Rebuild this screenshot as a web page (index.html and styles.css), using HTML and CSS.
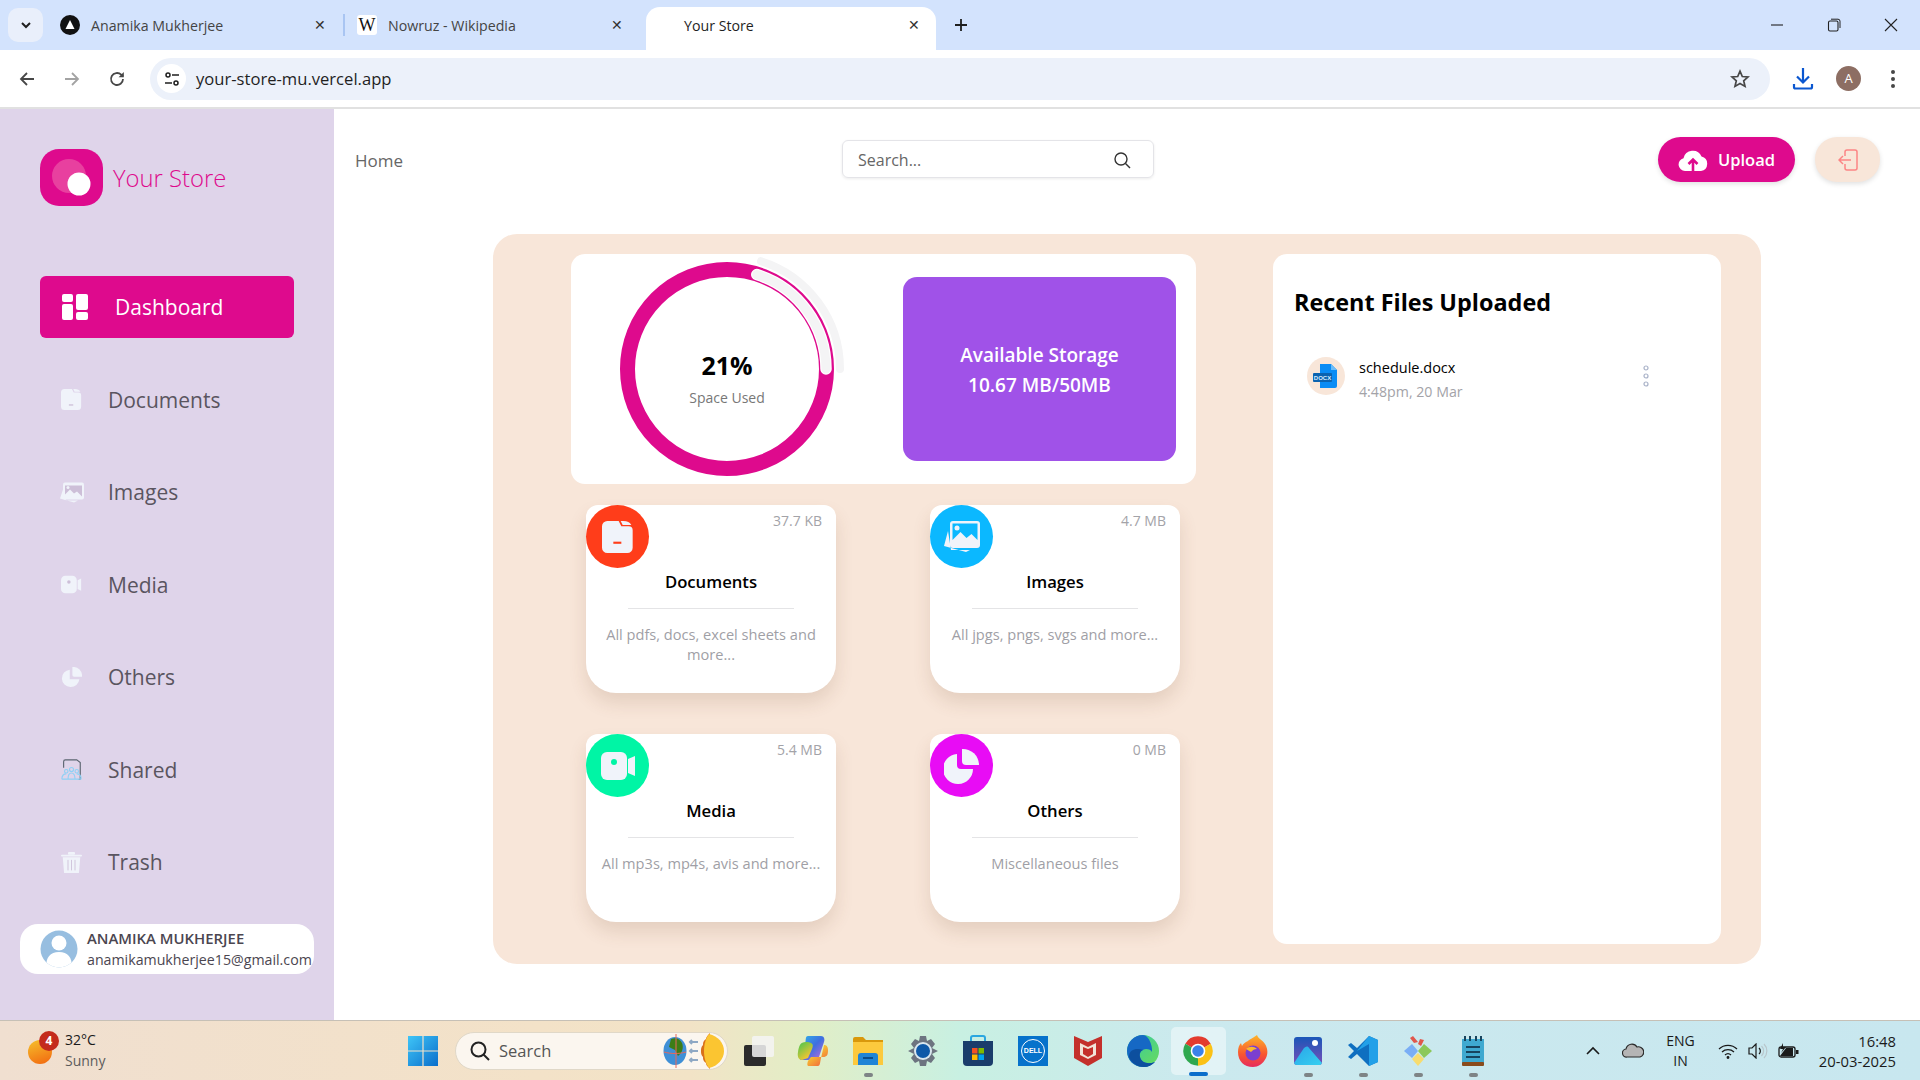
FILE: index.html
```html
<!DOCTYPE html>
<html>
    <head>
        <title>Your Store</title>
        <meta charset="UTF-8">
        <link rel="stylesheet" href="styles.css">
    </head>
    <body>
        <!-- browser frame -->
        <div class="tabstrip">
            <div class="tab-search">
                <svg width="14" height="14" viewBox="0 0 14 14"><path d="M3 5l4 4 4-4" fill="none" stroke="#1f1f1f" stroke-width="2"/></svg>
            </div>
            <div class="tab tab-first">
                <svg class="favicon" viewBox="0 0 20 20"><circle cx="10" cy="10" r="10" fill="#111"/><path d="M10 5l4.500 9h-9z" fill="#fff"/></svg>
                <span class="tab-title">Anamika Mukherjee</span>
                <span class="tab-close">✕</span>
            </div>
            <div class="tab-sep"></div>
            <div class="tab tab-second">
                <span class="favicon favicon-w">W</span>
                <span class="tab-title">Nowruz - Wikipedia</span>
                <span class="tab-close">✕</span>
            </div>
            <div class="tab tab-active">
                <span class="tab-title">Your Store</span>
                <span class="tab-close">✕</span>
            </div>
            <svg class="new-tab" width="16" height="16" viewBox="0 0 16 16"><path d="M8 2v12M2 8h12" stroke="#1f1f1f" stroke-width="1.800"/></svg>
            <div class="window-buttons">
                <svg width="14" height="14" viewBox="0 0 14 14"><path d="M1 7h12" stroke="#222" stroke-width="1.100"/></svg>
                <svg width="14" height="14" viewBox="0 0 14 14"><rect x="1.500" y="3" width="9.500" height="10" rx="1.500" fill="none" stroke="#222" stroke-width="1.100"/><path d="M4 1.200h7a2 2 0 0 1 2 2V10" fill="none" stroke="#222" stroke-width="1"/></svg>
                <svg width="14" height="14" viewBox="0 0 14 14"><path d="M1 1l12 12M13 1L1 13" stroke="#222" stroke-width="1.100"/></svg>
            </div>
        </div>
        <div class="toolbar">
            <svg class="nav-btn" width="18" height="18" viewBox="0 0 18 18"><path d="M16 9H3M9 3L3 9l6 6" fill="none" stroke="#474747" stroke-width="1.800"/></svg>
            <svg class="nav-btn" width="18" height="18" viewBox="0 0 18 18"><path d="M2 9h13M9 3l6 6-6 6" fill="none" stroke="#a3a3a3" stroke-width="1.800"/></svg>
            <svg class="nav-btn" width="18" height="18" viewBox="0 0 18 18"><path d="M15 9a6 6 0 1 1-1.800-4.300L15 6.500" fill="none" stroke="#474747" stroke-width="1.800"/><path d="M15.800 2v5.200h-5.200z" fill="#474747"/></svg>
            <div class="omnibox">
                <div class="site-chip">
                    <svg width="18" height="18" viewBox="0 0 18 18"><circle cx="5" cy="5" r="2" fill="none" stroke="#1f1f1f" stroke-width="1.500"/><path d="M9 5h7M2 13h7" stroke="#1f1f1f" stroke-width="1.500"/><circle cx="13" cy="13" r="2" fill="none" stroke="#1f1f1f" stroke-width="1.500"/></svg>
                </div>
                <span class="url">your-store-mu.vercel.app</span>
                <svg class="star" width="20" height="20" viewBox="0 0 20 20"><path d="M10 2.200l2.300 5.300 5.700.500-4.300 3.800 1.300 5.600L10 14.500l-5 2.900 1.300-5.600L2 8l5.700-.500z" fill="none" stroke="#474747" stroke-width="1.700"/></svg>
            </div>
            <svg class="download" width="22" height="24" viewBox="0 0 22 24"><path d="M11 1v14M5 9.500l6 6 6-6" fill="none" stroke="#0b57d0" stroke-width="2.200"/><path d="M2 17v3a1.500 1.500 0 0 0 1.500 1.500h15A1.500 1.500 0 0 0 20 20v-3" fill="none" stroke="#0b57d0" stroke-width="2.200"/></svg>
            <div class="profile">A</div>
            <svg class="menu-dots" width="6" height="20" viewBox="0 0 6 20"><circle cx="3" cy="3" r="2" fill="#474747"/><circle cx="3" cy="10" r="2" fill="#474747"/><circle cx="3" cy="17" r="2" fill="#474747"/></svg>
        </div>

        <!-- the store app -->
        <div class="app">
            <aside class="sidebar">
                <div class="brand">
                    <svg class="brand-logo" viewBox="0 0 63 57"><rect width="63" height="57" rx="19" fill="#de0a8d"/><circle cx="29" cy="27" r="17" fill="#e8409f"/><circle cx="39" cy="35" r="11.500" fill="#fff"/></svg>
                    <span class="brand-name">Your Store</span>
                </div>
                <nav class="nav">
                    <a class="nav-item nav-active">
                        <svg class="nav-icon" viewBox="0 0 26 26" fill="#fff"><rect x="0" y="0" width="11" height="8" rx="2"/><rect x="0" y="10" width="11" height="16" rx="2"/><rect x="14" y="0" width="12" height="16" rx="2"/><rect x="14" y="18" width="12" height="8" rx="2"/></svg>
                        <span>Dashboard</span>
                    </a>
                    <a class="nav-item">
                        <svg class="nav-icon" viewBox="0 0 24 24" fill="#f0f3fa"><path d="M4 0h8.500l2 4H20a3 3 0 0 1 3 3v13a4 4 0 0 1-4 4H4a4 4 0 0 1-4-4V4a4 4 0 0 1 4-4z"/><path d="M14 0h2c3 0 5 1 6 3h-6.500z"/><rect x="9" y="17.500" width="5" height="1.500" fill="#cdbfd8"/></svg>
                        <span>Documents</span>
                    </a>
                    <a class="nav-item">
                        <svg class="nav-icon nav-icon-wide" viewBox="0 0 24 20"><path d="M3 7L0 16l14 4 4-2H6z" fill="#f0f3fa"/><rect x="3" y="0" width="21" height="17" rx="2" fill="#f0f3fa"/><path d="M5 12l5-5 4 4 3-2 5 5V3H5z" fill="#cdbfd8"/><circle cx="8" cy="5" r="1.500" fill="#f0f3fa"/></svg>
                        <span>Images</span>
                    </a>
                    <a class="nav-item">
                        <svg class="nav-icon" viewBox="0 0 24 22" fill="#f0f3fa"><rect x="0" y="1" width="18" height="20" rx="5"/><path d="M19 6l4-2v14l-4-2z"/><circle cx="9" cy="8" r="2" fill="#cdbfd8"/></svg>
                        <span>Media</span>
                    </a>
                    <a class="nav-item">
                        <svg class="nav-icon" viewBox="0 0 24 24" fill="#f0f3fa"><path d="M10 3a10 10 0 1 0 11 11H10z"/><path d="M13 0a10 10 0 0 1 11 11H15a2 2 0 0 1-2-2z"/></svg>
                        <span>Others</span>
                    </a>
                    <a class="nav-item">
                        <svg class="nav-icon" viewBox="0 0 24 24" fill="none"><path d="M3 10V3a2 2 0 0 1 2-2h13l4 3v18a2 2 0 0 1-2 2" stroke="#5b6470" stroke-width="1.300"/><g stroke="#8fd0f5" stroke-width="1.300"><circle cx="6" cy="14" r="2"/><circle cx="12" cy="12" r="2.300"/><circle cx="18" cy="14" r="2"/><path d="M1 23c0-5 2-6 5-6M8 23c0-6 2-7 4-7s4 1 4 7M23 23c0-5-2-6-5-6M1 23h22"/></g></svg>
                        <span>Shared</span>
                    </a>
                    <a class="nav-item">
                        <svg class="nav-icon" viewBox="0 0 24 24" fill="#f0f3fa"><rect x="0" y="3" width="24" height="2" rx="1"/><rect x="8" y="0" width="8" height="3" rx="1"/><path d="M2 6h20l-1.500 18h-17z"/><path d="M8 9v12M12 9v12M16 9v12" stroke="#cdbfd8" stroke-width="1"/></svg>
                        <span>Trash</span>
                    </a>
                </nav>
                <div class="user-card">
                    <svg class="user-avatar" viewBox="0 0 38 38"><defs><clipPath id="avatar-clip"><circle cx="19" cy="19" r="18.500"/></clipPath></defs><circle cx="19" cy="19" r="18.500" fill="#97bee0"/><g clip-path="url(#avatar-clip)" fill="#fff"><circle cx="19" cy="13" r="7.500"/><path d="M6 38c0-11 4-16 13-16s13 5 13 16z"/></g></svg>
                    <div class="user-info">
                        <div class="user-name">ANAMIKA MUKHERJEE</div>
                        <div class="user-email">anamikamukherjee15@gmail.com</div>
                    </div>
                </div>
            </aside>

            <main class="content">
                <header class="topbar">
                    <span class="crumb">Home</span>
                    <div class="search">
                        <span>Search...</span>
                        <svg width="18" height="18" viewBox="0 0 18 18"><circle cx="8" cy="8" r="6" fill="none" stroke="#333" stroke-width="1.400"/><path d="M12.500 12.500L17 17" stroke="#333" stroke-width="1.400"/></svg>
                    </div>
                    <button class="upload-btn">
                        <svg width="30" height="24" viewBox="0 0 30 24"><path d="M7 23a6.500 6.500 0 0 1-1.500-12.800A9.500 9.500 0 0 1 23.500 8.500 7.400 7.400 0 0 1 23 23z" fill="#fff"/><path d="M15 23V12M10.500 16l4.500-4.500 4.500 4.500" fill="none" stroke="#de0a8d" stroke-width="2.600"/></svg>
                        Upload
                    </button>
                    <button class="logout-btn">
                        <svg width="20" height="22" viewBox="0 0 20 22" fill="none" stroke="#fb8585" stroke-width="1.500"><path d="M7 7V3a2 2 0 0 1 2-2h8a2 2 0 0 1 2 2v16a2 2 0 0 1-2 2H9a2 2 0 0 1-2-2v-4"/><path d="M13 11H1M5 7l-4 4 4 4"/></svg>
                    </button>
                </header>

                <section class="panel">
                    <div class="left-col">
                        <div class="storage-card">
                            <div class="ring">
                                <svg width="236" height="236" viewBox="0 0 236 236" fill="none">
                                    <circle cx="118" cy="118" r="99.500" stroke="#de0a8d" stroke-width="15"/>
                                    <path d="M147.800 23.600A99 99 0 0 1 217 118" stroke="#fff" stroke-width="11.500" stroke-linecap="round"/>
                                    <path d="M147.800 23.600A99 99 0 0 1 217 118" stroke="#f4f4f5" stroke-width="9" stroke-linecap="round"/>
                                    <path d="M152 10.200A113 113 0 0 1 231 118" stroke="#f4f4f5" stroke-width="8" stroke-linecap="round"/>
                                </svg>
                                <div class="ring-label">
                                    <div class="ring-value">21%</div>
                                    <div class="ring-text">Space Used</div>
                                </div>
                            </div>
                            <div class="available">Available Storage<br>10.67 MB/50MB</div>
                        </div>

                        <div class="type-grid">
                            <div class="type-card">
                                <div class="type-head">
                                    <div class="type-icon icon-red">
                                        <svg width="32" height="32" viewBox="0 0 24 24" fill="#f0f3fa"><path d="M4 0h8.500l2 4H20a3 3 0 0 1 3 3v13a4 4 0 0 1-4 4H4a4 4 0 0 1-4-4V4a4 4 0 0 1 4-4z"/><path d="M14 0h2c3 0 5 1 6 3h-6.500z"/><rect x="8.500" y="15.500" width="6" height="1.600" fill="#ff3d1a"/></svg>
                                    </div>
                                    <span class="type-size">37.7 KB</span>
                                </div>
                                <h3>Documents</h3>
                                <div class="type-line"></div>
                                <p>All pdfs, docs, excel sheets and more...</p>
                            </div>
                            <div class="type-card">
                                <div class="type-head">
                                    <div class="type-icon icon-blue">
                                        <svg width="38" height="34" viewBox="0 0 38 34"><path d="M5 11L1 26l22 6 4-2H8z" fill="#f0f3fa"/><rect x="7" y="1" width="30" height="27" rx="3" fill="#f0f3fa"/><path d="M9.500 20l8-8 6 6 5-4 6 6V3.500h-25z" fill="#0bb8ff"/><circle cx="14" cy="8" r="2.500" fill="#f0f3fa"/></svg>
                                    </div>
                                    <span class="type-size">4.7 MB</span>
                                </div>
                                <h3>Images</h3>
                                <div class="type-line"></div>
                                <p>All jpgs, pngs, svgs and more...</p>
                            </div>
                            <div class="type-card">
                                <div class="type-head">
                                    <div class="type-icon icon-green">
                                        <svg width="34" height="28" viewBox="0 0 34 28" fill="#f0f3fa"><rect x="0" y="0" width="26" height="28" rx="6"/><path d="M27 7l7-3v20l-7-3z"/><circle cx="13" cy="10" r="3" fill="#00f5a5"/></svg>
                                    </div>
                                    <span class="type-size">5.4 MB</span>
                                </div>
                                <h3>Media</h3>
                                <div class="type-line"></div>
                                <p>All mp3s, mp4s, avis and more...</p>
                            </div>
                            <div class="type-card">
                                <div class="type-head">
                                    <div class="type-icon icon-magenta">
                                        <svg width="36" height="36" viewBox="0 0 36 36" fill="#f0f3fa"><path d="M13 6a15 15 0 1 0 16 15H17a4 4 0 0 1-4-4z"/><path d="M18 1a16 16 0 0 1 17 16H22a4 4 0 0 1-4-4z"/></svg>
                                    </div>
                                    <span class="type-size">0 MB</span>
                                </div>
                                <h3>Others</h3>
                                <div class="type-line"></div>
                                <p>Miscellaneous files</p>
                            </div>
                        </div>
                    </div>

                    <div class="recent">
                        <h2>Recent Files Uploaded</h2>
                        <div class="file-row">
                            <div class="file-icon">
                                <svg width="26" height="26" viewBox="0 0 26 26"><path d="M7 1h11l6 6v16a2 2 0 0 1-2 2H7z" fill="#0a8cf5"/><path d="M18 1l6 6h-6z" fill="#6bbcf8"/><rect x="0" y="10" width="19" height="9" rx="1" fill="#0b63b0"/><text x="9.500" y="17" class="docx-label">DOCX</text></svg>
                            </div>
                            <div class="file-text">
                                <div class="file-name">schedule.docx</div>
                                <div class="file-date">4:48pm, 20 Mar</div>
                            </div>
                            <svg class="file-menu" width="6" height="22" viewBox="0 0 6 22" fill="none" stroke="#a9b2c8" stroke-width="1.200"><circle cx="3" cy="3" r="2"/><circle cx="3" cy="11" r="2"/><circle cx="3" cy="19" r="2"/></svg>
                        </div>
                    </div>
                </section>
            </main>
        </div>

        <!-- windows taskbar -->
        <footer class="taskbar">
            <div class="weather">
                <div class="weather-icon"><span class="weather-badge">4</span></div>
                <div class="weather-text">
                    <div>32°C</div>
                    <div class="weather-sub">Sunny</div>
                </div>
            </div>
            <svg class="start" width="30" height="30" viewBox="0 0 30 30">
                <defs><linearGradient id="start-grad" x1="0" y1="0" x2="1" y2="1"><stop offset="0" stop-color="#3fc5f7"/><stop offset="1" stop-color="#0a6ecb"/></linearGradient></defs>
                <path d="M0 0h14.400v14.400H0zM15.600 0H30v14.400H15.600zM0 15.600h14.400V30H0zM15.600 15.600H30V30H15.600z" fill="url(#start-grad)"/>
            </svg>
            <div class="win-search">
                <svg width="22" height="22" viewBox="0 0 22 22"><circle cx="9.500" cy="9.500" r="7" fill="none" stroke="#222" stroke-width="2"/><path d="M14.500 14.500L20 20" stroke="#222" stroke-width="2"/></svg>
                <span>Search</span>
                <svg class="search-art" width="62" height="36" viewBox="0 0 62 36">
                    <ellipse cx="12" cy="18" rx="11.500" ry="14" fill="#3f8fd6"/>
                    <path d="M8 6c5-2 9 0 11 4 2 5 0 10-4 13l-3-6-6-3z" fill="#3c7d16"/>
                    <path d="M1 19c7 2 15 2 22 0M13 1v34" stroke="#e8685a" stroke-width="1" fill="none"/>
                    <path d="M35 9h-8m2-2l-2 2 2 2M35 18h-8m2-2l-2 2 2 2M35 27h-8m2-2l-2 2 2 2" stroke="#8ea8c4" stroke-width="2" fill="none"/>
                    <path d="M47 0c-3 3-4 5-4 6-3 2-3 4-3 6-2 2-2 4-2 6s0 4 2 6c0 2 0 4 3 6 0 2 1 3 4 6z" fill="#d9701a"/>
                    <path d="M46 1c9 2 15 9 15 17s-6 15-15 17c-3-4-5-10-5-17s2-13 5-17z" fill="#fbc531"/>
                </svg>
            </div>
            <svg class="taskview" width="30" height="30" viewBox="0 0 30 30"><rect x="0" y="9" width="22" height="21" rx="2" fill="#2b2b2b"/><rect x="8" y="0" width="22" height="21" rx="2" fill="#f5f5f5" fill-opacity=".85"/></svg>
            <div class="app-icons">
                <div class="app-icon">
                    <svg width="32" height="32" viewBox="0 0 32 32"><defs><linearGradient id="cop-a" x1="0" y1="0" x2="1" y2="1"><stop offset="0" stop-color="#2fb7e8"/><stop offset=".5" stop-color="#3f6fe0"/><stop offset="1" stop-color="#c86bd8"/></linearGradient><linearGradient id="cop-b" x1="0" y1="0" x2="1" y2="1"><stop offset="0" stop-color="#3fc64f"/><stop offset=".5" stop-color="#f7c531"/><stop offset="1" stop-color="#f0503f"/></linearGradient></defs><path d="M11 1h13c3 0 4 3 3 6l-5 15c-1 2-3 3-5 3H3c1-1 2-3 3-6l2-8c1-5 0-10 3-10z" fill="url(#cop-a)"/><path d="M9 7C3 7 2 11 1 17c-1 5 1 8 4 8l6-2 4-9c2-5 0-7-6-7zM21 31h-9c-2 0-2-2-1-5l3-4h12c4 0 5-2 5-7 0-4-2-5-4-5l-3 13c-1 5-1 8-3 8z" fill="url(#cop-b)"/></svg>
                </div>
                <div class="app-icon app-open">
                    <svg width="30" height="28" viewBox="0 0 30 28"><path d="M0 2a2 2 0 0 1 2-2h8l3 3h17v25H0z" fill="#d9980c"/><path d="M0 5h30v23H0z" fill="#fcc93d"/><path d="M5 28v-9a3 3 0 0 1 3-3h14a3 3 0 0 1 3 3v9z" fill="#1f84d6"/><rect x="10" y="20" width="10" height="2" fill="#0a4d8c"/></svg>
                </div>
                <div class="app-icon">
                    <svg width="30" height="30" viewBox="0 0 30 30"><path d="M12 0h6l1 5 4-2 4 5-3 4 6 3-6 3 3 4-4 5-4-2-1 5h-6l-1-5-4 2-4-5 3-4-6-3 6-3-3-4 4-5 4 2z" fill="#6d7480"/><circle cx="15" cy="15" r="9" fill="#dbe7ef"/><circle cx="15" cy="15" r="7" fill="#0f59a8"/></svg>
                </div>
                <div class="app-icon">
                    <svg width="30" height="31" viewBox="0 0 30 31"><path d="M8 7V3a2 2 0 0 1 2-2h10a2 2 0 0 1 2 2v4" fill="none" stroke="#2aa7e0" stroke-width="2"/><path d="M0 6h30v21a4 4 0 0 1-4 4H4a4 4 0 0 1-4-4z" fill="#1a3d6b"/><rect x="9" y="13" width="5.500" height="5.500" fill="#f25022"/><rect x="15.500" y="13" width="5.500" height="5.500" fill="#7fba00"/><rect x="9" y="19.500" width="5.500" height="5.500" fill="#ffb900"/><rect x="15.500" y="19.500" width="5.500" height="5.500" fill="#00a4ef"/></svg>
                </div>
                <div class="app-icon">
                    <div class="dell-logo"><span>DELL</span></div>
                </div>
                <div class="app-icon">
                    <svg width="28" height="30" viewBox="0 0 28 30"><path d="M0 0l14 6 14-6v22l-14 8-14-8z" fill="#c4302b"/><path d="M6 7l8 4 8-4v12l-8 4-8-4z" fill="#f1e4d8"/><path d="M9 18V11l5 2 5-2v7l-5 3z" fill="#c4302b"/></svg>
                </div>
                <div class="app-icon">
                    <svg width="32" height="32" viewBox="0 0 32 32"><defs><linearGradient id="edge-a" x1="0" y1="0" x2="1" y2="1"><stop offset="0" stop-color="#32c8a8"/><stop offset="1" stop-color="#6bdc5a"/></linearGradient></defs><circle cx="16" cy="16" r="16" fill="url(#edge-a)"/><path d="M16 0C7 0 0 7 0 16c0 9 7 16 16 16 5 0 9-2 12-5-8 3-14 0-15-5-1-4 2-8 6-8 3 0 5 1 6 3 1-5-3-17-9-17z" fill="#1668c4"/><path d="M2 22c2 6 9 10 15 10 4 0 8-2 11-5-8 3-14 0-15-5-1-3 0-6 3-7-6-2-14-1-14 7z" fill="#0d4f9e"/></svg>
                </div>
                <div class="app-icon app-current">
                    <svg width="32" height="32" viewBox="0 0 24 24"><path d="M12 12L2.470 6.500A11 11 0 0 1 21.530 6.500z" fill="#e33b2e"/><path d="M12 12L2.470 6.500A11 11 0 0 0 12 23z" fill="#2fa84f"/><path d="M12 12l9.530-5.500A11 11 0 0 1 12 23z" fill="#fbc116"/><circle cx="12" cy="12" r="5.500" fill="#fff"/><circle cx="12" cy="12" r="4.300" fill="#3b82ea"/></svg>
                </div>
                <div class="app-icon">
                    <svg width="30" height="32" viewBox="0 0 30 32"><defs><linearGradient id="fox-a" x1="0" y1="0" x2="0" y2="1"><stop offset="0" stop-color="#fdb52a"/><stop offset=".6" stop-color="#f9562f"/><stop offset="1" stop-color="#e62b5f"/></linearGradient></defs><path d="M19 0c1 4 6 5 8 9 3 5 3 10 1 14-3 6-8 9-13 9C6 32 0 26 0 17c0-4 1-7 3-9l1 3c1-2 3-4 6-5-1 0 3-2 9-6z" fill="url(#fox-a)"/><circle cx="15" cy="18" r="7.500" fill="#7b3fd0"/><path d="M8 14c3-3 8-3 11 0-3 0-4 1-6 3-2-1-3-2-5-3z" fill="#fbb72b"/></svg>
                </div>
                <div class="app-icon app-open">
                    <svg width="28" height="28" viewBox="0 0 28 28"><defs><linearGradient id="photo-a" x1="0" y1="0" x2="0" y2="1"><stop offset="0" stop-color="#1a56b8"/><stop offset="1" stop-color="#7a4fb8"/></linearGradient><linearGradient id="photo-b" x1="0" y1="0" x2="1" y2="1"><stop offset="0" stop-color="#2aa5e8"/><stop offset="1" stop-color="#36d0f0"/></linearGradient></defs><rect width="28" height="28" rx="3" fill="url(#photo-a)"/><circle cx="21" cy="6" r="3" fill="#fff"/><path d="M0 26l10-15c2-2 4-2 5 0l13 15a3 3 0 0 1-3 2H3a3 3 0 0 1-3-2z" fill="url(#photo-b)"/></svg>
                </div>
                <div class="app-icon app-open">
                    <svg width="30" height="30" viewBox="0 0 30 30"><path d="M21 0L9 12 3 7 0 9l6 6-6 6 3 2 6-5 12 12 9-4V4z" fill="#0f6fc0"/><path d="M21 0l9 4v22l-9 4V8l-12 7z" fill="#22a0e8"/></svg>
                </div>
                <div class="app-icon app-open">
                    <svg width="30" height="30" viewBox="0 0 30 30"><path d="M9 8l6 7-6 7-8-7z" fill="#7aaef5"/><path d="M21 8l8 7-8 7-6-7z" fill="#8cc85a"/><path d="M15 17l6 6-6 7-6-7z" fill="#f7dc6f"/><path d="M10 0l5 6-4 1-4-5zM17 3l4 1-3 6-3-2z" fill="#e0574c"/></svg>
                </div>
                <div class="app-icon app-open">
                    <svg width="22" height="30" viewBox="0 0 22 30"><rect y="3" width="22" height="24" fill="#3fa9d0"/><rect y="26" width="22" height="4" rx="1" fill="#8a4b1c"/><g fill="#17445e"><rect x="2" y="0" width="2" height="5"/><rect x="7" y="0" width="2" height="5"/><rect x="13" y="0" width="2" height="5"/><rect x="18" y="0" width="2" height="5"/><rect x="4" y="10" width="14" height="2"/><rect x="4" y="15" width="14" height="2"/><rect x="4" y="20" width="14" height="2"/></g></svg>
                </div>
            </div>
            <div class="tray">
                <svg class="tray-caret" width="14" height="9" viewBox="0 0 14 9"><path d="M1 8l6-6 6 6" fill="none" stroke="#1a1a1a" stroke-width="1.600"/></svg>
                <svg class="tray-cloud" width="22" height="15" viewBox="0 0 22 15"><path d="M5 14a4 4 0 0 1-1-8 6 6 0 0 1 11-2 5 5 0 0 1 3 10z" fill="#b5b5b5" stroke="#2a2a2a" stroke-width="1.200"/></svg>
                <div class="tray-lang">ENG<br>IN</div>
                <svg class="tray-wifi" width="20" height="16" viewBox="0 0 20 16" fill="none" stroke="#1a1a1a" stroke-width="1.300"><path d="M1 6a13 13 0 0 1 18 0M4 9a9 9 0 0 1 12 0M7 12a4.500 4.500 0 0 1 6 0"/><circle cx="10" cy="14.500" r=".8" fill="#1a1a1a"/></svg>
                <svg class="tray-sound" width="20" height="16" viewBox="0 0 20 16" fill="none" stroke="#1a1a1a" stroke-width="1.200"><path d="M1 5h3l4-4v14l-4-4H1z"/><path d="M11 5a4 4 0 0 1 0 6"/><path d="M13.500 3a7 7 0 0 1 0 10M16 1a10 10 0 0 1 0 14" stroke="#b9c6cc"/></svg>
                <svg class="tray-battery" width="21" height="16" viewBox="0 0 21 16"><rect x="1" y="4" width="16" height="10" rx="2" fill="none" stroke="#1a1a1a" stroke-width="1.300"/><path d="M2 13L8 5h7v8z" fill="#1a1a1a"/><rect x="18" y="7" width="2.500" height="4" fill="#1a1a1a"/><path d="M5 0L2 6h3L3 10l5-6H5z" fill="#1a1a1a"/></svg>
                <div class="tray-clock">16:48<br>20-03-2025</div>
            </div>
        </footer>
    </body>
</html>
```

FILE: styles.css
```css
* {
    box-sizing: border-box;
}
body {
    margin: 0;
    height: 100vh;
    display: flex;
    flex-direction: column;
    overflow: hidden;
    background: #fff;
    font-family: "Open Sans", "Liberation Sans", sans-serif;
    color: #000;
}

/* browser frame */
.tabstrip {
    height: 50px;
    flex: none;
    display: flex;
    align-items: flex-end;
    background: #d3e3fd;
    padding-left: 8px;
}
.tab-search {
    width: 35px;
    height: 34px;
    margin-bottom: 8px;
    border-radius: 10px;
    background: #e9effb;
    display: flex;
    align-items: center;
    justify-content: center;
}
.tab {
    height: 43px;
    padding-bottom: 7px;
    display: flex;
    align-items: center;
    font-size: 14.200px;
    color: #444;
}
.tab-first {
    width: 300px;
    padding-left: 17px;
}
.tab-sep {
    width: 2px;
    height: 22px;
    margin-bottom: 14px;
    background: #a9c5f2;
}
.tab-second {
    width: 301px;
    padding-left: 12px;
}
.tab-active {
    width: 290px;
    padding-left: 38px;
    background: #fff;
    border-radius: 14px 14px 0 0;
    color: #1f1f1f;
}
.favicon {
    width: 20px;
    height: 20px;
    margin-right: 11px;
    flex: none;
}
.favicon-w {
    background: #fff;
    border-radius: 3px;
    font-family: "Liberation Serif", serif;
    font-size: 18px;
    line-height: 20px;
    text-align: center;
    color: #111;
}
.tab-title {
    width: 223px;
    white-space: nowrap;
}
.tab-active .tab-title {
    width: 224px;
}
.tab-close {
    font-size: 14px;
    font-family: "DejaVu Sans", sans-serif;
    color: #333;
}
.new-tab {
    margin: 0 0 17px 17px;
}
.window-buttons {
    margin-left: auto;
    display: flex;
    gap: 43px;
    padding-right: 22px;
    align-self: center;
}
.toolbar {
    height: 59px;
    flex: none;
    display: flex;
    align-items: center;
    background: #fff;
    border-radius: 10px 10px 0 0;
    border-bottom: 2px solid #e1e1e1;
    padding-left: 18px;
}
.nav-btn {
    margin-right: 27px;
}
.omnibox {
    width: 1620px;
    height: 42px;
    margin-left: -3px;
    border-radius: 21px;
    background: #ecf1fa;
    display: flex;
    align-items: center;
    padding-left: 7px;
}
.site-chip {
    width: 29px;
    height: 29px;
    border-radius: 50%;
    background: #fff;
    display: flex;
    align-items: center;
    justify-content: center;
}
.url {
    margin-left: 10px;
    font-size: 16.600px;
    color: #1f1f1f;
}
.star {
    margin-left: auto;
    margin-right: 20px;
}
.download {
    margin-left: 22px;
}
.profile {
    width: 25px;
    height: 25px;
    margin-left: 22px;
    border-radius: 50%;
    background: #8d6e63;
    color: #fff;
    font-size: 13px;
    line-height: 25px;
    text-align: center;
}
.menu-dots {
    margin-left: 29px;
}

/* app */
.app {
    flex: 1;
    display: flex;
    min-height: 0;
}
.sidebar {
    width: 334px;
    flex: none;
    background: #dfd4ea;
    padding: 40px 20px 0;
    display: flex;
    flex-direction: column;
}
.brand {
    display: flex;
    align-items: center;
    padding-left: 20px;
    height: 57px;
}
.brand-logo {
    width: 63px;
    height: 57px;
}
.brand-name {
    margin-left: 10px;
    font-size: 23.800px;
    font-weight: 300;
    color: #de0a8d;
}
.nav {
    margin: 70px 0 0 20px;
    display: flex;
    flex-direction: column;
}
.nav-item {
    width: 254px;
    height: 62px;
    margin-bottom: 30.500px;
    display: flex;
    align-items: center;
    padding-left: 21px;
    font-size: 21px;
    color: #5a5560;
}
.nav-item span {
    margin-left: 26px;
}
.nav-icon {
    width: 21px;
    height: 21px;
    flex: none;
}
.nav-icon-wide {
    width: 24px;
    margin: 0 -2px 0 -1px;
}
.nav-active {
    background: #de0a8d;
    border-radius: 6px;
    color: #fff;
    padding-left: 22px;
}
.nav-active .nav-icon {
    width: 26px;
    height: 26px;
}
.nav-active span {
    margin-left: 27px;
}
.user-card {
    width: 294px;
    height: 50px;
    border-radius: 18px;
    background: #fff;
    display: flex;
    align-items: center;
    padding-left: 20px;
}
.user-avatar {
    width: 38px;
    height: 38px;
    flex: none;
}
.user-info {
    margin-left: 9px;
    white-space: nowrap;
    font-size: 14.200px;
    line-height: 21px;
    color: #4b4650;
}
.user-name {
    font-size: 14.900px;
    font-weight: 600;
}
.content {
    flex: 1;
    min-width: 0;
}
.topbar {
    height: 125px;
    display: flex;
    align-items: flex-start;
    padding: 28px 40px 0 21px;
}
.crumb {
    width: 487px;
    padding-top: 12px;
    font-size: 17px;
    color: #666;
}
.search {
    width: 312px;
    height: 38px;
    margin-top: 3px;
    border: 1px solid #e4e4e8;
    border-radius: 6px;
    box-shadow: 0 1px 3px rgba(0, 0, 0, .08);
    display: flex;
    align-items: center;
    justify-content: space-between;
    padding: 1px 22px 0 15px;
    font-size: 16px;
    color: #666;
}
.upload-btn {
    width: 137px;
    height: 45px;
    margin-left: auto;
    border: none;
    border-radius: 23px;
    background: #de0a8d;
    color: #fff;
    font-family: inherit;
    font-size: 16.500px;
    font-weight: 600;
    display: flex;
    align-items: center;
    justify-content: center;
    gap: 10px;
    box-shadow: 0 2px 5px rgba(0, 0, 0, .12);
}
.logout-btn {
    width: 65px;
    height: 45px;
    margin-left: 20px;
    padding-right: 5px;
    border: none;
    border-radius: 22px;
    background: #f8e6d9;
    display: flex;
    align-items: center;
    justify-content: center;
    box-shadow: 0 2px 5px rgba(0, 0, 0, .12);
}
.panel {
    width: 1268px;
    height: 730px;
    margin-left: 159px;
    border-radius: 24px;
    background: #f8e6d9;
    display: flex;
    padding: 20px 40px 20px 78px;
}
.left-col {
    width: 625px;
    flex: none;
}
.storage-card {
    height: 230px;
    border-radius: 14px;
    background: #fff;
    display: flex;
    align-items: center;
    padding: 0 20px 0 38px;
}
.ring {
    position: relative;
    width: 236px;
    height: 236px;
}
.ring svg {
    display: block;
}
.ring-label {
    position: absolute;
    inset: 0;
    padding-top: 18px;
    display: flex;
    flex-direction: column;
    align-items: center;
    justify-content: center;
}
.ring-value {
    font-size: 25px;
    font-weight: 700;
    line-height: 34px;
}
.ring-text {
    margin-top: 6px;
    font-size: 14px;
    line-height: 20px;
    color: #777;
}
.available {
    width: 273px;
    height: 184px;
    margin-left: auto;
    padding-top: 2px;
    border-radius: 14px;
    background: #a052e8;
    color: #fff;
    font-size: 19px;
    font-weight: 600;
    line-height: 30px;
    text-align: center;
    display: flex;
    align-items: center;
    justify-content: center;
}
.type-grid {
    margin-top: 21px;
    padding-left: 15px;
    display: grid;
    grid-template-columns: 250px 250px;
    grid-template-rows: 188px 188px;
    column-gap: 94px;
    row-gap: 41px;
}
.type-card {
    border-radius: 12px 12px 30px 30px;
    background: #fff;
    box-shadow: 0 10px 18px rgba(110, 70, 40, .14);
    text-align: center;
}
.type-head {
    height: 63px;
    display: flex;
    justify-content: space-between;
    align-items: flex-start;
    padding-right: 14px;
}
.type-icon {
    width: 63px;
    height: 63px;
    border-radius: 50%;
    display: flex;
    align-items: center;
    justify-content: center;
}
.icon-red {
    background: #ff3d1a;
}
.icon-blue {
    background: #0bb8ff;
}
.icon-green {
    background: #00f5a5;
}
.icon-magenta {
    background: #e80cf5;
}
.type-size {
    padding-top: 6px;
    font-size: 14px;
    line-height: 20px;
    color: #a3a3a8;
}
.type-card h3 {
    margin: 2px 0 0;
    font-size: 16.700px;
    font-weight: 600;
    line-height: 24px;
}
.type-line {
    width: 166px;
    height: 1px;
    margin: 14px auto 0;
    background: #e4e4e6;
}
.type-card p {
    margin: 15px 0 0;
    padding: 0 12px;
    font-size: 14.600px;
    font-weight: 500;
    line-height: 20px;
    color: #9f9fa6;
}
.recent {
    width: 448px;
    margin-left: 77px;
    border-radius: 14px;
    background: #fff;
    padding: 31px 21px 0;
}
.recent h2 {
    margin: 0;
    font-size: 23.400px;
    font-weight: 700;
    line-height: 34px;
}
.file-row {
    margin-top: 38px;
    padding-left: 13px;
    display: flex;
    align-items: flex-start;
}
.file-icon {
    width: 38px;
    height: 38px;
    border-radius: 50%;
    background: #f8e6d9;
    display: flex;
    align-items: center;
    justify-content: center;
}
.docx-label {
    font-family: "Liberation Sans", sans-serif;
    font-size: 6px;
    font-weight: 700;
    fill: #dbeeff;
    text-anchor: middle;
}
.file-text {
    margin: -2px 0 0 14px;
}
.file-name {
    font-size: 14.500px;
    font-weight: 500;
    line-height: 25px;
}
.file-date {
    font-size: 14.200px;
    line-height: 24px;
    color: #a3a3a8;
}
.file-menu {
    margin: 8px 0 0 180px;
}

/* taskbar */
.taskbar {
    height: 60px;
    flex: none;
    display: flex;
    align-items: center;
    border-top: 1px solid #c6c0b6;
    background: linear-gradient(90deg, #f0dfd0 0, #f3e2c8 28%, #f2e3c6 36%, #e2eec6 42%, #c8f0e2 50%, #cbe9ee 62%, #c8e7ef 100%);
    padding-left: 28px;
    font-size: 14px;
}
.weather {
    width: 380px;
    display: flex;
    align-items: center;
}
.weather-icon {
    position: relative;
    width: 24px;
    height: 24px;
    margin-top: 2px;
    border-radius: 50%;
    background: linear-gradient(160deg, #f5c12c, #f2660f);
}
.weather-badge {
    position: absolute;
    left: 11px;
    top: -9px;
    width: 20px;
    height: 20px;
    border-radius: 50%;
    background: #c42b1c;
    color: #fff;
    font-size: 12px;
    font-weight: 700;
    line-height: 20px;
    text-align: center;
}
.weather-text {
    margin-left: 13px;
    margin-top: -1px;
    line-height: 21px;
    color: #1a1a1a;
}
.weather-sub {
    color: #5c5c5c;
}
.start {
    flex: none;
}
.win-search {
    width: 273px;
    height: 38px;
    margin-left: 17px;
    border-radius: 19px;
    border: 1px solid #e0d8c8;
    background: #fbf6ef;
    display: flex;
    align-items: center;
    padding-left: 13px;
    font-size: 16.500px;
    color: #555;
}
.win-search span {
    margin-left: 8px;
}
.search-art {
    margin-left: auto;
    margin-right: 2px;
}
.taskview {
    margin-left: 16px;
    flex: none;
}
.app-icons {
    margin-left: 11.500px;
    display: flex;
}
.app-icon {
    position: relative;
    width: 55px;
    height: 48px;
    display: flex;
    align-items: center;
    justify-content: center;
}
.app-open::after {
    content: "";
    position: absolute;
    left: 23px;
    bottom: -2px;
    width: 9px;
    height: 4px;
    border-radius: 2px;
    background: #7e8486;
}
.app-current {
    background: rgba(255, 255, 255, .45);
    border-radius: 5px;
}
.app-current::after {
    content: "";
    position: absolute;
    left: 18px;
    bottom: -1px;
    width: 19px;
    height: 4px;
    border-radius: 2px;
    background: #0a6ecb;
}
.dell-logo {
    width: 30px;
    height: 30px;
    background: #0672cb;
    display: flex;
    align-items: center;
    justify-content: center;
}
.dell-logo span {
    width: 24px;
    height: 24px;
    border: 1.500px solid #fff;
    border-radius: 50%;
    color: #fff;
    font-family: "Liberation Sans", sans-serif;
    font-size: 7px;
    font-weight: 700;
    line-height: 21px;
    text-align: center;
}
.tray {
    flex: 1;
    display: flex;
    align-items: center;
    color: #1a1a1a;
}
.tray-caret {
    margin-left: 85px;
}
.tray-cloud {
    margin-left: 22px;
}
.tray-lang {
    width: 50px;
    margin-left: 12px;
    font-size: 14px;
    line-height: 20px;
    text-align: center;
}
.tray-wifi {
    margin-left: 12px;
}
.tray-sound {
    margin-left: 10px;
}
.tray-battery {
    margin-left: 10px;
}
.tray-clock {
    margin-left: auto;
    padding-right: 24px;
    font-size: 14.800px;
    line-height: 20px;
    text-align: right;
}
```
